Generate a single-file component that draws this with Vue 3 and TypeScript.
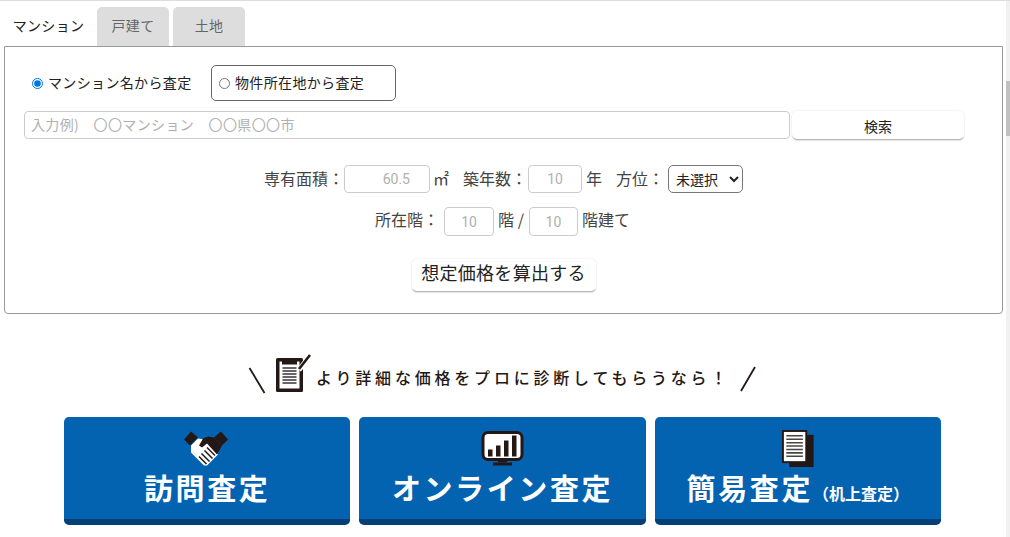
<script setup lang="ts">
import { ref } from 'vue'

const mode = ref<'name' | 'address'>('name')
const tabs = ['マンション', '戸建て', '土地']
const active = ref(0)
const heading = 'より詳細な価格をプロに診断してもらうなら！'
</script>

<template>
  <div class="page">
    <div class="tabs">
      <button
        v-for="(t, i) in tabs"
        :key="t"
        type="button"
        class="tab"
        :class="{ on: active === i }"
        @click="active = i"
      >{{ t }}</button>
    </div>

    <section class="panel">
      <div class="modes">
        <label class="mode first">
          <input v-model="mode" type="radio" name="mode" value="name" />
          <span>マンション名から査定</span>
        </label>
        <label class="mode boxed">
          <input v-model="mode" type="radio" name="mode" value="address" />
          <span>物件所在地から査定</span>
        </label>
      </div>

      <div class="search">
        <input class="keyword" type="text" placeholder="入力例)　〇〇マンション　〇〇県〇〇市" />
        <button type="button" class="soft find">検索</button>
      </div>

      <div class="line one">
        <span>専有面積：</span>
        <input class="num area" type="text" placeholder="60.5" />
        <span class="unit-a">㎡</span>
        <span class="lab-b">築年数：</span>
        <input class="num age" type="text" placeholder="10" />
        <span class="unit-b">年</span>
        <span class="lab-c">方位：</span>
        <select class="dir">
          <option>未選択</option>
          <option>北</option>
          <option>南</option>
        </select>
      </div>

      <div class="line two">
        <span>所在階：</span>
        <input class="num floor" type="text" placeholder="10" />
        <span class="unit-c">階 /</span>
        <input class="num floor narrow" type="text" placeholder="10" />
        <span class="unit-d">階建て</span>
      </div>

      <div class="calc-wrap">
        <button type="button" class="soft calc">想定価格を算出する</button>
      </div>
    </section>

    <div class="heading">
      <svg class="slash" width="18" height="27" viewBox="0 0 18 27">
        <path d="M1.5 1 16.5 26" stroke="#231815" stroke-width="1.8" fill="none" />
      </svg>
      <svg class="clip" width="35" height="38" viewBox="0 0 35 38">
        <rect x="0" y="4" width="27" height="34" rx="1.5" fill="#231815" />
        <rect x="3.500" y="7.500" width="20" height="27" fill="#fff" />
        <rect x="6" y="4" width="15" height="6.500" fill="#231815" />
        <path d="M6.500 14h14M6.500 17h14M6.500 20h14M6.500 23h14M6.500 26h14M6.500 29h14" stroke="#3a3533" stroke-width="1.500" />
        <path d="M23 16 33.500 2" stroke="#fff" stroke-width="5" />
        <path d="M23 15 34 1" stroke="#231815" stroke-width="2.600" />
      </svg>
      <span class="heading-text">{{ heading }}</span>
      <svg class="slash back" width="18" height="27" viewBox="0 0 18 27">
        <path d="M16 1 2 25" stroke="#231815" stroke-width="1.8" fill="none" />
      </svg>
    </div>

    <div class="cards">
      <a class="card">
        <svg class="ico shake" width="46" height="36" viewBox="0 0 46 36">
          <path d="M1 9 8 1l7 6-8 8zM45 9l-7-8-7 6 8 8z" fill="#231815" />
          <path d="M8 15 15 8l7 1 4 5 9 10-11 11h-3L8 22z" fill="#fff" />
          <path d="M20 8l5-2 6 1 8 8-5 9-10-11-5 4-3-2z" fill="#231815" />
          <path d="M32 25 24 17M29.500 28 21.500 20M26.500 31 18.500 23M23.500 33.500 16 26" stroke="#231815" stroke-width="1.500" fill="none" />
        </svg>
        <span class="label">訪問査定</span>
      </a>
      <a class="card">
        <svg class="ico" width="43" height="36" viewBox="0 0 43 36">
          <rect x="2" y="2" width="39" height="27" rx="5" fill="#fff" stroke="#231815" stroke-width="3" />
          <path d="M7 19h4.500v7H7zM15 15h4.500v11H15zM23 10h4.500v16H23zM31 5h4.500v21H31z" fill="#231815" />
          <path d="M12 32h19v3H12z" fill="#231815" />
          <path d="M17 29h9v3h-9z" fill="#231815" />
        </svg>
        <span class="label">オンライン査定</span>
      </a>
      <a class="card">
        <svg class="ico" width="34" height="38" viewBox="0 0 34 38">
          <path d="M8 5h25v33H8z" fill="#231815" />
          <rect x="1.500" y="1" width="24" height="32" fill="#fff" stroke="#231815" stroke-width="2" />
          <path d="M5 6h17M5 9.500h17M5 13h17M5 16.500h17M5 20h17M5 23.500h17M5 27h17" stroke="#4a4544" stroke-width="1.600" />
        </svg>
        <span class="label rough">簡易査定<small>（机上査定）</small></span>
      </a>
    </div>

    <div class="scrollbar" aria-hidden="true"><i></i></div>
  </div>
</template>

<style>
html, body { margin: 0; overflow: hidden; background: #fff; }
</style>

<style scoped>
.page {
  position: relative;
  box-sizing: border-box;
  width: 1010px;
  height: 537px;
  overflow: hidden;
  border-top: 1px solid #ddd;
  padding: 6px 7px 0 4px;
  font-family: "Noto Sans CJK JP", "Noto Sans", sans-serif;
  color: #333;
  background: #fff;
}
.tabs { display: flex; gap: 4px; height: 39px; }
.tab {
  width: 72px;
  padding: 0 0 3px;
  border: 0;
  border-radius: 5px 5px 0 0;
  background: #ddd;
  color: #666;
  font: inherit;
  font-size: 14px;
  letter-spacing: .3px;
}
.tab.on {
  width: 89px;
  background: transparent;
  color: #222;
}
.panel {
  box-sizing: border-box;
  width: 999px;
  height: 268px;
  border: 1px solid #999;
  border-radius: 0 0 4px 4px;
  padding: 18px 19px 0;
}
.modes { display: flex; align-items: center; height: 36px; padding-left: 8px; }
.mode { display: flex; align-items: center; font-size: 14px; color: #222; letter-spacing: .35px; }
.mode input { margin: 0; width: 11px; height: 11px; accent-color: #0075e4; }
.mode span { padding-bottom: 2px; }
.first { gap: 5px; width: 179px; }
.boxed {
  box-sizing: border-box;
  width: 185px;
  height: 36px;
  gap: 5px;
  padding-left: 7px;
  border: 1px solid #666;
  border-radius: 5px;
}
.search { display: flex; gap: 2px; margin-top: 10px; height: 28px; }
.keyword {
  box-sizing: border-box;
  width: 766px;
  height: 28px;
  padding: 0 6px 2px;
  border: 1px solid #ccc;
  border-radius: 4px;
  font: inherit;
  font-size: 14px;
  letter-spacing: .37px;
  outline: none;
}
.keyword::placeholder, .num::placeholder { color: #b0b0b0; opacity: 1; }
.soft {
  border: 0;
  background: #fff;
  border-radius: 5px;
  box-shadow: 0 2px 2px -1px rgba(0, 0, 0, .35), 0 0 2px rgba(0, 0, 0, .12);
  font: inherit;
  color: #222;
  padding: 0;
}
.find { width: 172px; font-size: 14px; padding-top: 1px; }
.line {
  display: flex;
  align-items: center;
  justify-content: center;
  font-size: 16px;
  line-height: 1;
  color: #444;
}
.line span { padding-bottom: 3px; }
.one { margin-top: 26px; height: 28px; }
.two { margin-top: 14px; height: 29px; padding-right: 2px; }
.two span { padding-bottom: 5px; }
.num {
  box-sizing: border-box;
  height: 100%;
  border: 1px solid #ccc;
  border-radius: 4px;
  font: inherit;
  font-family: "Roboto", sans-serif;
  font-size: 14px;
  text-align: center;
  padding: 0;
  outline: none;
}
.area { width: 86px; text-align: right; padding-right: 19px; }
.age { width: 54px; }
.floor { width: 50px; }
.narrow { width: 49px; }
.unit-a { margin-left: 3px; }
.lab-b { margin-left: 14px; margin-right: 1px; }
.unit-b { margin-left: 4px; }
.lab-c { margin-left: 14px; margin-right: 4px; }
.two > span:first-child { margin-right: 5px; }
.unit-c { margin: 0 5px 0 4px; white-space: nowrap; }
.unit-d { margin-left: 4px; }
.dir {
  box-sizing: border-box;
  width: 75px;
  height: 28px;
  border: 1px solid #777;
  border-radius: 5px;
  background: #fff;
  color: #222;
  font: inherit;
  font-size: 14px;
  padding-left: 3px;
}
.calc-wrap { display: flex; justify-content: center; margin-top: 23px; }
.calc {
  width: 184px;
  height: 32px;
  padding-bottom: 6px;
  font-size: 18px;
  letter-spacing: .3px;
}
.heading {
  display: flex;
  align-items: flex-start;
  margin-top: 40px;
  padding-left: 244px;
  height: 63px;
  color: #231815;
}
.slash { margin-top: 13px; }
.clip { margin: 0 0 0 10px; }
.heading-text {
  margin: 12px 0 0 5px;
  width: 424px;
  white-space: nowrap;
  font-size: 16px;
  line-height: 22px;
  font-weight: 500;
  letter-spacing: 3.800px;
}
.back { margin: 12px 0 0 -1px; }
.cards { display: flex; gap: 9px; padding-left: 60px; }
.card {
  box-sizing: border-box;
  width: 286.330px;
  height: 108px;
  display: flex;
  flex-direction: column;
  align-items: center;
  padding-top: 13px;
  border-radius: 5px;
  background: #0463b0;
  border-bottom: 6px solid #043f75;
  color: #fff;
}
.ico { flex: none; height: 37px; }
.shake { margin-left: -2px; }
.label {
  margin-top: 0;
  font-size: 29px;
  line-height: 40px;
  font-weight: 700;
  letter-spacing: 2.600px;
  white-space: nowrap;
}
.label small { font-size: 16px; letter-spacing: 0; margin-left: 0; }
.scrollbar {
  position: absolute;
  top: 0;
  right: 0;
  width: 4px;
  height: 100%;
  background: #f1f1f1;
}
.scrollbar i { display: block; margin-top: 80px; height: 55px; background: #c1c1c1; }
</style>
